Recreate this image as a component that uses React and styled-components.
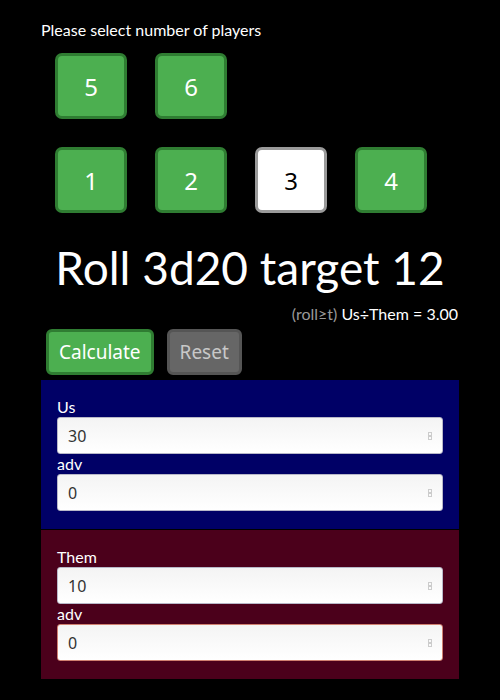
import React, { useState } from "react";
import styled, { createGlobalStyle } from "styled-components";

const GlobalStyle = createGlobalStyle`
  html, body {
    margin: 0;
    padding: 0;
    background: #000;
  }
  body {
    font-family: Lato, "Open Sans", sans-serif;
    color: #fff;
  }
`;

const Page = styled.div`
  width: 418px;
  padding: 20px 0 0 41px;
`;

const Prompt = styled.div`
  font-size: 16px;
  line-height: 20px;
  color: #fff;
`;

const PlayerRow = styled.div`
  display: flex;
  gap: 28px;
  padding-left: 14px;
  margin-top: ${(p) => p.top}px;
`;

const PlayerButton = styled.button`
  width: 72px;
  height: 66px;
  box-sizing: border-box;
  border-radius: 7px;
  border: 3px solid ${(p) => (p.selected ? "#9a9a9a" : "#2f7d32")};
  background: ${(p) => (p.selected ? "#fff" : "#4caf50")};
  color: ${(p) => (p.selected ? "#000" : "#fff")};
  font-family: "Noto Sans", sans-serif;
  font-size: 24px;
  padding: 0;
  cursor: pointer;
`;

const Heading = styled.h1`
  margin: 19px 0 0 0;
  font-weight: 400;
  font-size: 46px;
  line-height: 72px;
  text-align: center;
  white-space: nowrap;
  color: #fff;
`;

const Ratio = styled.div`
  text-align: right;
  font-size: 16px;
  line-height: 20px;
  margin-right: 1px;
  color: #fff;
`;

const Muted = styled.span`
  color: #999;
`;

const ActionRow = styled.div`
  display: flex;
  gap: 13px;
  margin: 5px 0 0 5px;
`;

const ActionButton = styled.button`
  height: 46px;
  box-sizing: border-box;
  padding: 0 10px;
  border-radius: 6px;
  border: 3px solid ${(p) => (p.muted ? "#555" : "#2f7d32")};
  background: ${(p) => (p.muted ? "#666" : "#4caf50")};
  color: ${(p) => (p.muted ? "#c8c8c8" : "#fff")};
  font-family: "Noto Sans", sans-serif;
  font-size: 19px;
`;

const Panel = styled.div`
  background: ${(p) => p.bg};
  padding: 17px 16px 18px 16px;
  margin-top: ${(p) => p.top || 0}px;
`;

const Label = styled.div`
  font-size: 16px;
  line-height: 20px;
  color: #fff;
`;

const Field = styled.div`
  position: relative;
  height: 37px;
  box-sizing: border-box;
  border: 1px solid ${(p) => p.edge || "#b8b8c8"};
  border-radius: 3px;
  background: linear-gradient(#f4f4f4, #fff);
  display: flex;
  align-items: center;
  padding-left: 10px;
  font-family: "Noto Sans", sans-serif;
  font-size: 16px;
  color: #333;
`;

const Spinner = styled.svg`
  position: absolute;
  right: 10px;
  top: 14px;
`;

const NumberField = ({ value, edge }) => (
  <Field edge={edge}>
    {value}
    <Spinner width="4" height="8" viewBox="0 0 4 8">
      <rect x="0.5" y="0.5" width="3" height="3" fill="none" stroke="#ccc" />
      <rect x="0.5" y="4.5" width="3" height="3" fill="none" stroke="#ccc" />
    </Spinner>
  </Field>
);

const Side = ({ name, count, adv, bg, top, edge }) => (
  <Panel bg={bg} top={top}>
    <Label>{name}</Label>
    <NumberField value={count} />
    <Label>adv</Label>
    <NumberField value={adv} edge={edge} />
  </Panel>
);

const App = () => {
  const [players, setPlayers] = useState(3);
  return (
    <>
      <GlobalStyle />
      <Page>
        <Prompt>Please select number of players</Prompt>
        <PlayerRow top={13}>
          {[5, 6].map((n) => (
            <PlayerButton key={n} selected={players === n} onClick={() => setPlayers(n)}>
              {n}
            </PlayerButton>
          ))}
        </PlayerRow>
        <PlayerRow top={28}>
          {[1, 2, 3, 4].map((n) => (
            <PlayerButton key={n} selected={players === n} onClick={() => setPlayers(n)}>
              {n}
            </PlayerButton>
          ))}
        </PlayerRow>
        <Heading>Roll 3d20 target 12</Heading>
        <Ratio>
          <Muted>(roll≥t)</Muted> Us÷Them = 3.00
        </Ratio>
        <ActionRow>
          <ActionButton>Calculate</ActionButton>
          <ActionButton muted>Reset</ActionButton>
        </ActionRow>
        <Side name="Us" count="30" adv="0" bg="#000066" top={5} />
        <Side name="Them" count="10" adv="0" bg="#4b001b" top={1} edge="#d08070" />
      </Page>
    </>
  );
};

export default App;
